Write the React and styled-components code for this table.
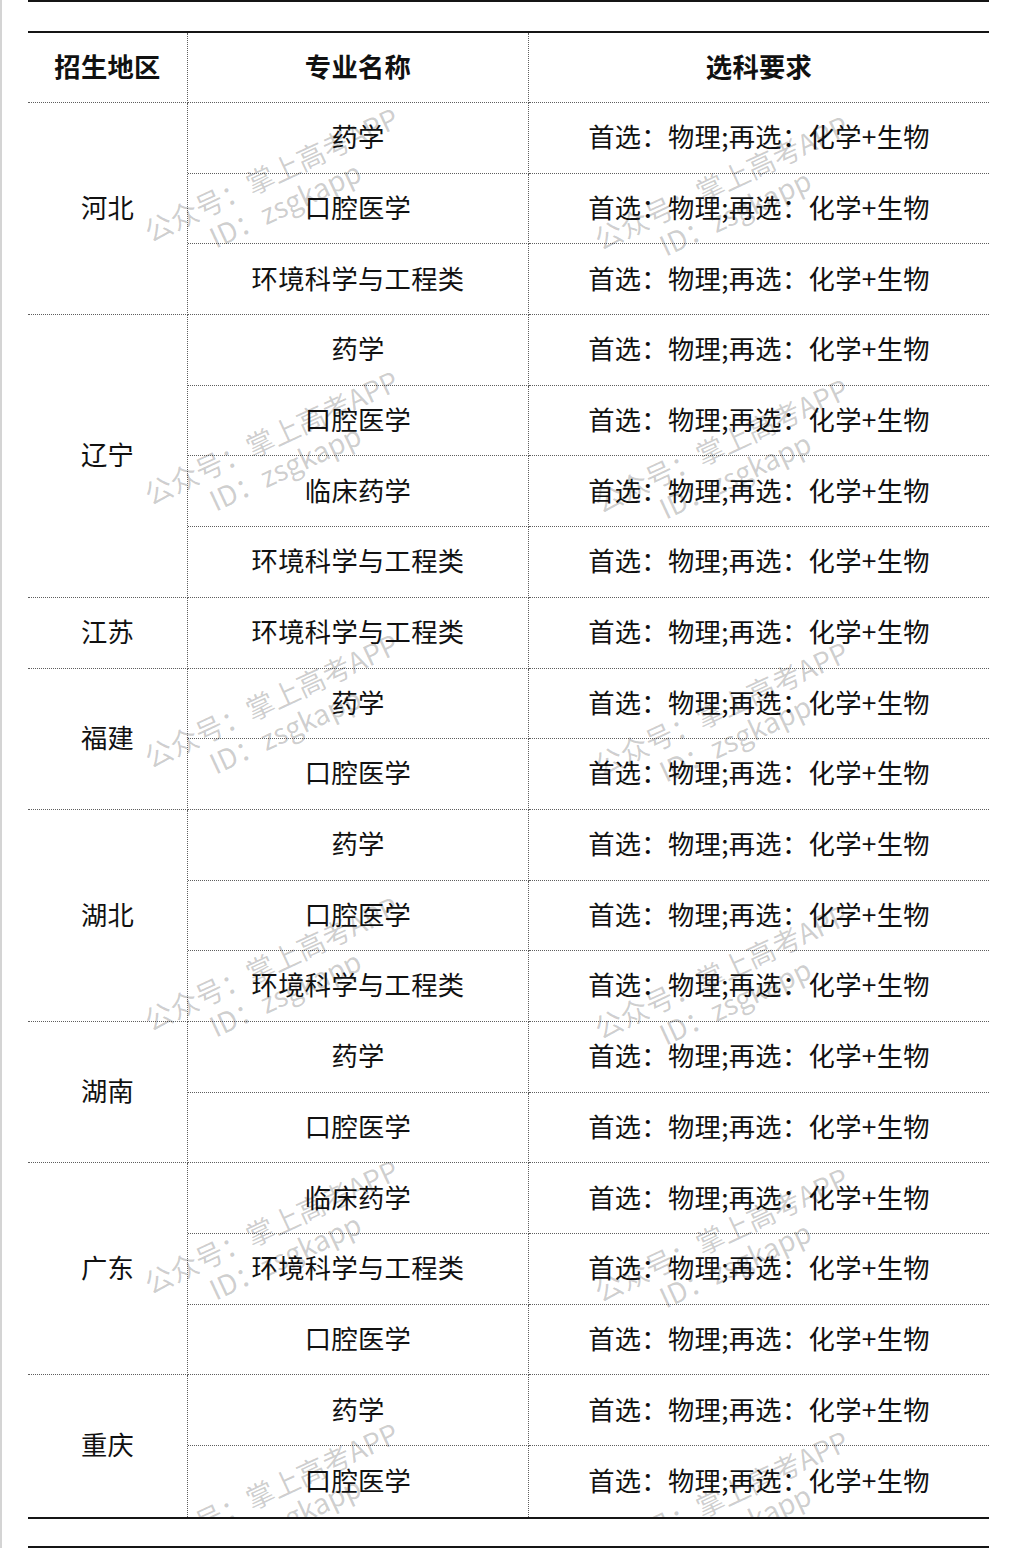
import styled, { createGlobalStyle } from "styled-components";

const GlobalStyle = createGlobalStyle`
  * { box-sizing: border-box; }
  body {
    margin: 0;
    background: #fff;
    font-family: "Noto Sans CJK SC", "Noto Sans", sans-serif;
    color: #111;
  }
`;

const Page = styled.div`
  position: relative;
  width: 1026px;
  min-height: 1548px;
  border-left: 2px solid #d4d4d4;
  padding: 0 37px 0 26px;
`;

const Rule = styled.div`
  width: 961px;
  height: 2px;
  background: #151515;
  margin-top: ${p => p.$gap || 0}px;
`;

const Table = styled.div`
  position: relative;
  overflow: hidden;
  width: 961px;
  margin-top: 29px;
  display: grid;
  grid-template-columns: 160px 341px 460px;
  grid-template-rows: 70px;
  grid-auto-rows: 70.7px;
  border-top: 2px solid #151515;
  border-bottom: 2px solid #151515;
`;

const Cell = styled.div`
  display: flex;
  align-items: center;
  justify-content: center;
  padding-bottom: 3px;
  font-size: 26.3px;
  line-height: 1;
  font-weight: ${p => (p.$head ? 700 : 400)};
  letter-spacing: 0.3px;
  white-space: nowrap;
  border-bottom: ${p => (p.$last ? "none" : "1px dotted #5e5e5e")};
  border-right: ${p => (p.$edge ? "none" : "1px dotted #5e5e5e")};
  grid-row: ${p => (p.$span ? `span ${p.$span}` : "auto")};
`;

const Watermark = styled.div`
  position: absolute;
  left: ${p => p.$x}px;
  top: ${p => p.$y}px;
  transform: translate(-50%, -50%) rotate(-25deg);
  display: flex;
  flex-direction: column;
  align-items: center;
  font-size: 28px;
  line-height: 33px;
  color: rgba(0, 0, 0, 0.2);
  white-space: nowrap;
  pointer-events: none;
`;

const groups = [
  ["河北", ["药学", "口腔医学", "环境科学与工程类"]],
  ["辽宁", ["药学", "口腔医学", "临床药学", "环境科学与工程类"]],
  ["江苏", ["环境科学与工程类"]],
  ["福建", ["药学", "口腔医学"]],
  ["湖北", ["药学", "口腔医学", "环境科学与工程类"]],
  ["湖南", ["药学", "口腔医学"]],
  ["广东", ["临床药学", "环境科学与工程类", "口腔医学"]],
  ["重庆", ["药学", "口腔医学"]],
];

const REQ = "首选：物理;再选：化学+生物";

export default function App() {
  const marks = [];
  for (let k = 0; k < 6; k++) {
    marks.push({ x: 250, y: 156 + k * 263 });
    marks.push({ x: 700, y: 164 + k * 263 });
  }

  return (
    <Page>
      <GlobalStyle />
      <Rule />
      <Table>
        <Cell $head>招生地区</Cell>
        <Cell $head>专业名称</Cell>
        <Cell $head $edge>选科要求</Cell>
        {groups.map(([region, majors], gi) => {
          const lastGroup = gi === groups.length - 1;
          return majors.map((m, i) => {
            const last = lastGroup && i === majors.length - 1;
            return [
              i === 0 && (
                <Cell key={`${region}-r`} $span={majors.length} $last={lastGroup}>
                  {region}
                </Cell>
              ),
              <Cell key={`${region}-${i}-m`} $last={last}>{m}</Cell>,
              <Cell key={`${region}-${i}-q`} $last={last} $edge>{REQ}</Cell>,
            ];
          });
        })}
        {marks.map((w, i) => (
          <Watermark key={i} $x={w.x} $y={w.y}>
            <span>公众号：掌上高考APP</span>
            <span>ID：zsgkapp</span>
          </Watermark>
        ))}
      </Table>
      <Rule $gap={27} />
    </Page>
  );
}
